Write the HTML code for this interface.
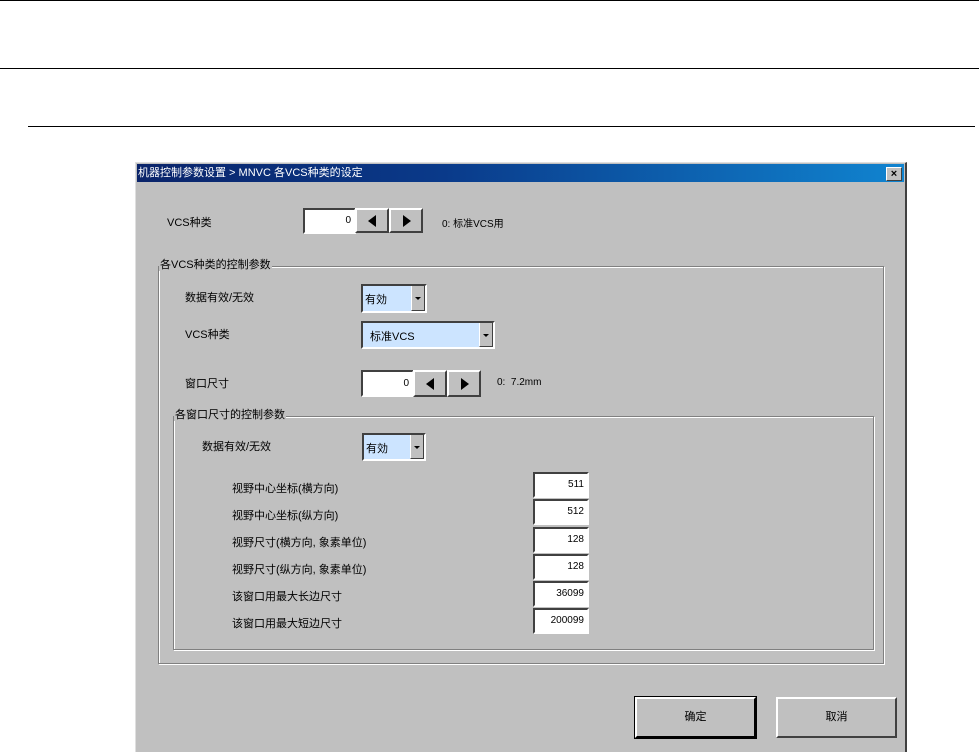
<!DOCTYPE html>
<html><head><meta charset="utf-8"><style>
body{margin:0;width:979px;height:752px;background:#fff;position:relative;overflow:hidden;font-family:"Liberation Sans","Noto Sans CJK SC","WenQuanYi Zen Hei",sans-serif;font-size:11px;color:#000}
.a{position:absolute}
.hl{position:absolute;height:1px;background:#000}
.win{position:absolute;left:135px;top:162px;width:772px;height:590px;background:#c0c0c0;border-left:1px solid #dfdfdf;border-top:1px solid #dfdfdf;border-right:2px solid #404040;box-sizing:border-box}
.title{position:absolute;left:1px;top:1px;right:1px;height:18px;background:linear-gradient(90deg,#0a246a,#0a3a8a 40%,#1084d0);color:#fff;font-size:11px;line-height:18px;padding-left:1px}
.cls{position:absolute;right:2px;top:3px;width:14px;height:12px;background:#c0c0c0;border:1px solid;border-color:#fff #404040 #404040 #fff;font-size:11px;line-height:12px;text-align:center;color:#000;font-weight:bold}
.in{position:absolute;background:#fff;border:2px solid;border-color:#404040 #fff #fff #404040;box-sizing:border-box;text-align:right;padding-right:3px;font-size:10px}
.btn{position:absolute;background:#c0c0c0;border:2px solid;border-color:#fff #404040 #404040 #fff;box-sizing:border-box;text-align:center}
.combo{position:absolute;border:2px solid;border-color:#404040 #fff #fff #404040;box-sizing:border-box;background:#cce4ff}
.combo .dd{position:absolute;right:0;top:0;bottom:0;width:14px;background:#c0c0c0;border-left:1px solid #fff;border-right:1px solid #404040;border-bottom:1px solid #404040;box-sizing:border-box}
.combo .dd:after{content:"";position:absolute;left:3px;top:50%;margin-top:-1px;border-left:3px solid transparent;border-right:3px solid transparent;border-top:3px solid #000}
.grp{position:absolute;border:1px solid #808080;box-shadow:1px 1px 0 #fff,inset 1px 1px 0 #fff}
.gt{position:absolute;background:#c0c0c0;padding:0 1px;line-height:12px}
.tl:after{content:"";position:absolute;left:50%;top:50%;margin:-6px 0 0 -4px;border-top:6px solid transparent;border-bottom:6px solid transparent;border-right:8px solid #000}
.tr:after{content:"";position:absolute;left:50%;top:50%;margin:-6px 0 0 -3px;border-top:6px solid transparent;border-bottom:6px solid transparent;border-left:8px solid #000}
</style></head><body>
<div class="hl" style="left:0;top:0;width:979px"></div>
<div class="hl" style="left:0;top:68px;width:979px"></div>
<div class="hl" style="left:28px;top:126px;width:947px"></div>

<div class="win">
<div class="title">机器控制参数设置 &gt; MNVC 各VCS种类的设定<div class="cls">×</div></div>
</div>

<div class="a" style="left:167px;top:214px">VCS种类</div>
<div class="in" style="left:303px;top:208px;width:53px;height:26px;line-height:22px">0</div>
<div class="btn tl" style="left:355px;top:208px;width:34px;height:25px"></div>
<div class="btn tr" style="left:389px;top:208px;width:34px;height:25px"></div>
<div class="a" style="left:442px;top:215px;font-size:10px">0: 标准VCS用</div>

<div class="grp" style="left:158px;top:266px;width:724px;height:396px"></div>
<div class="gt" style="left:159px;top:259px">各VCS种类的控制参数</div>
<div class="a" style="left:185px;top:289px">数据有效/无效</div>
<div class="combo" style="left:361px;top:284px;width:66px;height:29px"><span style="position:absolute;left:2px;top:5px">有効</span><div class="dd"></div></div>
<div class="a" style="left:185px;top:326px">VCS种类</div>
<div class="combo" style="left:361px;top:321px;width:134px;height:28px"><span style="position:absolute;left:7px;top:5px">标准VCS</span><div class="dd"></div></div>

<div class="a" style="left:185px;top:375px">窗口尺寸</div>
<div class="in" style="left:361px;top:370px;width:53px;height:27px;line-height:23px">0</div>
<div class="btn tl" style="left:413px;top:370px;width:34px;height:27px"></div>
<div class="btn tr" style="left:447px;top:370px;width:34px;height:27px"></div>
<div class="a" style="left:497px;top:377px;font-size:10px">0:&nbsp; 7.2mm</div>

<div class="grp" style="left:173px;top:416px;width:699px;height:232px"></div>
<div class="gt" style="left:174px;top:409px">各窗口尺寸的控制参数</div>
<div class="a" style="left:202px;top:438px">数据有效/无效</div>
<div class="combo" style="left:362px;top:433px;width:64px;height:28px"><span style="position:absolute;left:2px;top:5px">有効</span><div class="dd"></div></div>

<div class="a" style="left:232px;top:480px">视野中心坐标(横方向)</div>
<div class="in" style="left:533px;top:472px;width:56px;height:26px;line-height:22px">511</div>
<div class="a" style="left:232px;top:507px">视野中心坐标(纵方向)</div>
<div class="in" style="left:533px;top:499px;width:56px;height:26px;line-height:22px">512</div>
<div class="a" style="left:232px;top:534px">视野尺寸(横方向, 象素单位)</div>
<div class="in" style="left:533px;top:527px;width:56px;height:26px;line-height:22px">128</div>
<div class="a" style="left:232px;top:561px">视野尺寸(纵方向, 象素单位)</div>
<div class="in" style="left:533px;top:554px;width:56px;height:26px;line-height:22px">128</div>
<div class="a" style="left:232px;top:588px">该窗口用最大长边尺寸</div>
<div class="in" style="left:533px;top:581px;width:56px;height:26px;line-height:22px">36099</div>
<div class="a" style="left:232px;top:615px">该窗口用最大短边尺寸</div>
<div class="in" style="left:533px;top:608px;width:56px;height:26px;line-height:22px">200099</div>

<div class="btn" style="left:635px;top:697px;width:121px;height:41px;line-height:37px;border-color:#fff #000 #000 #fff;outline:1px solid #000">确定</div>
<div class="btn" style="left:776px;top:697px;width:121px;height:41px;line-height:37px">取消</div>
</body></html>
